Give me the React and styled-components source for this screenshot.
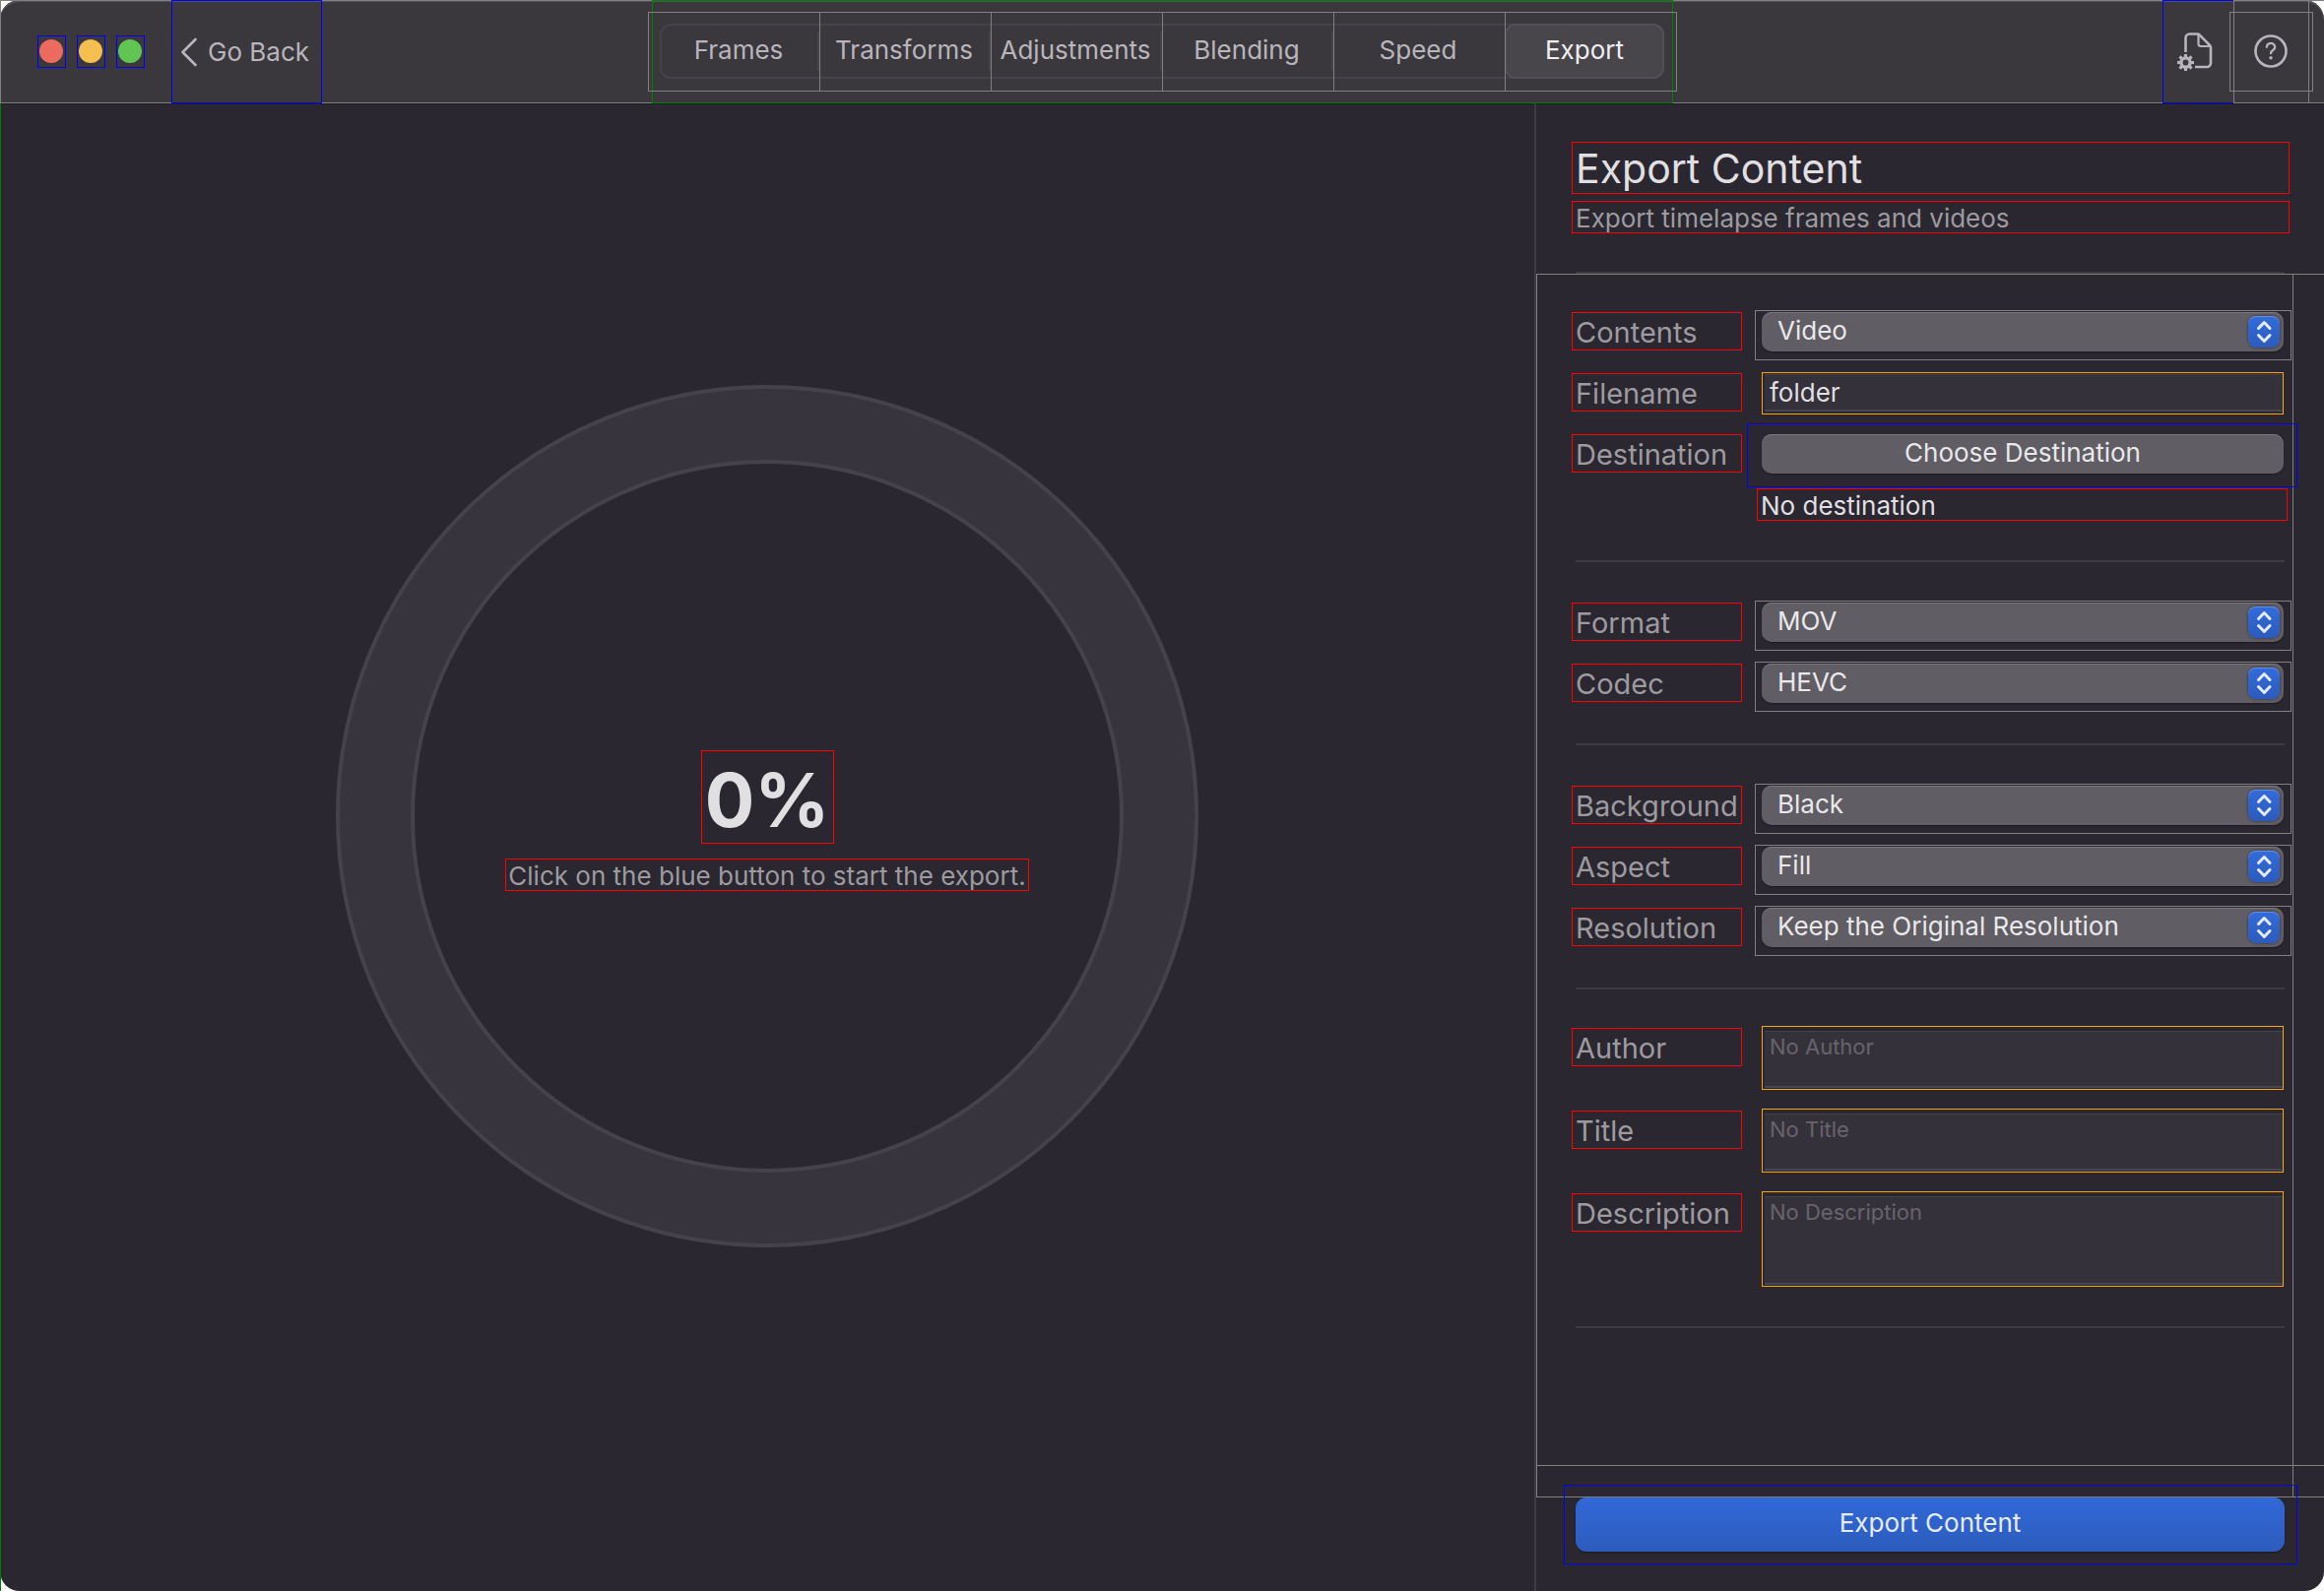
import React from 'react';
import styled, { createGlobalStyle, css } from 'styled-components';

const c = {
  bg: '#2a2730',
  bar: '#3a373d',
  line: '#3e3a44',
  frameGrey: '#808080',
  frameRed: '#ff0000',
  frameBlue: '#0000ff',
  frameGreen: '#008000',
  frameOrange: '#ffa500',
  text: '#e0dfe1',
  muted: '#9d9ba0',
  barText: '#b8b5bc',
  pill: '#605d64',
  pillEdge: '#7c797f',
};

const GlobalStyle = createGlobalStyle`
  *, *::before, *::after { box-sizing: border-box; }
  body {
    margin: 0;
    background: #ffffff;
    font-family: Inter, "Liberation Sans", sans-serif;
    font-size: 26px;
    color: ${c.text};
  }
  button, input, select, textarea { font: inherit; color: inherit; margin: 0; }
  h1, p { margin: 0; font-weight: 400; }
`;

/* Debug frame drawn over a control, outside its own box */
const frame = (color, inset) => css`
  position: relative;
  &::after {
    content: '';
    position: absolute;
    inset: ${inset};
    border: 1px solid ${color};
    pointer-events: none;
  }
`;

const Window = styled.div`
  min-height: 100vh;
  display: flex;
  flex-direction: column;
`;

/* ---------- Title bar ---------- */

const TitleBar = styled.header`
  position: relative;
  display: grid;
  grid-template-columns: 1fr auto 1fr;
  height: 105px;
  background: ${c.bar};
  border-radius: 20px 20px 0 0;
  box-shadow: inset 0 2px 0 #545158;
  color: ${c.barText};
  &::before {
    content: '';
    position: absolute;
    inset: 0;
    border: 1px solid ${c.frameGrey};
    border-right: 0;
    pointer-events: none;
  }
`;

const BarSide = styled.div`
  position: relative;
  display: flex;
  align-items: center;
  justify-content: ${(p) => (p.$end ? 'flex-end' : 'flex-start')};
  padding: ${(p) => (p.$end ? '0 15px 0 0' : '0 0 0 38px')};
`;

const Lights = styled.div`
  display: flex;
  gap: 11px;
  margin-right: 27px;
`;

const Light = styled.button`
  display: block;
  width: 29px;
  height: 33px;
  padding: 3px 2px 4px 1px;
  border: 1px solid ${c.frameBlue};
  background: none;
  &::before {
    content: '';
    display: block;
    width: 24px;
    height: 24px;
    border-radius: 50%;
    background: ${(p) => p.$color};
  }
`;

const BackButton = styled.button`
  display: flex;
  align-items: center;
  gap: 10px;
  width: 153px;
  height: 105px;
  padding: 0 0 0 8px;
  border: 1px solid ${c.frameBlue};
  background: none;
  white-space: nowrap;
`;

const TabArea = styled.nav`
  position: relative;
  display: flex;
  justify-content: center;
  width: 1037px;
  height: 105px;
  padding-top: 23px;
  border: 1px solid ${c.frameGreen};
`;

const TabList = styled.div`
  display: grid;
  grid-template-columns: 162px repeat(4, 174px) 162px;
  height: 56px;
  border-radius: 11px;
  box-shadow: inset 0 0 0 2px #454249;
`;

const Tab = styled.button`
  border: 0;
  padding: ${(p) => (p.$selected ? '0 0 3px' : '0 2px 3px 0')};
  border-radius: ${(p) => (p.$selected ? '11px' : '0')};
  background: ${(p) =>
    p.$divider
      ? 'linear-gradient(#454249, #454249) right center / 2px 40px no-repeat'
      : p.$selected
        ? '#48454b'
        : 'none'};
  box-shadow: ${(p) => (p.$selected ? 'inset 0 0 0 2px #524f56' : 'none')};
  color: ${(p) => (p.$selected ? '#efeef0' : 'inherit')};
  ${frame(c.frameGrey, '-12px -1px -13px 0')}
  &:first-child::after { left: -12px; }
  &:last-child::after { right: -13px; }
`;

const PresetButton = styled.button`
  display: flex;
  align-items: center;
  justify-content: center;
  width: 73px;
  height: 105px;
  padding: 0 7px 0 0;
  border: 1px solid ${c.frameBlue};
  background: none;
`;

const HelpButton = styled.button`
  display: flex;
  align-items: center;
  justify-content: center;
  width: 77px;
  height: 105px;
  margin-left: -1px;
  padding: 0 2px 1px 0;
  border: 1px solid ${c.frameGrey};
  background: none;
  ${frame(c.frameGrey, '11px -5px')}
`;

/* ---------- Body ---------- */

const Body = styled.main`
  position: relative;
  flex: 1;
  display: grid;
  grid-template-columns: 1fr 802px;
  background: ${c.bg};
  border-radius: 0 0 20px 20px;
  box-shadow: inset 0 1px 0 #1f1c23;
  &::after {
    content: '';
    position: absolute;
    inset: 0 auto 0 0;
    width: 1px;
    background: ${c.frameGreen};
  }
`;

const Stage = styled.section`
  display: flex;
  align-items: center;
  justify-content: center;
  padding-bottom: 63px;
`;

const Ring = styled.div`
  display: grid;
  place-items: center;
  width: 876px;
  height: 876px;
  border: 4px solid #46424b;
  border-radius: 50%;
  background: #38343d;
`;

const Disc = styled.div`
  display: flex;
  flex-direction: column;
  align-items: center;
  justify-content: center;
  gap: 15px;
  width: 724px;
  height: 724px;
  padding-top: 9px;
  border: 4px solid #46424b;
  border-radius: 50%;
  background: ${c.bg};
`;

const Percent = styled.output`
  width: 135px;
  height: 95px;
  border: 1px solid ${c.frameRed};
  text-align: center;
  font-size: 75px;
  line-height: 99px;
  font-weight: 700;
`;

const TextBox = styled.p`
  height: 33px;
  padding: 0 ${(p) => p.$pad || 3}px;
  border: 1px solid ${c.frameRed};
  line-height: 33px;
  white-space: nowrap;
  color: ${(p) => (p.$bright ? c.text : c.muted)};
`;

/* ---------- Sidebar ---------- */

const Sidebar = styled.aside`
  display: flex;
  flex-direction: column;
  border-left: 2px solid ${c.line};
`;

const SideHeader = styled.div`
  display: flex;
  flex-direction: column;
  gap: 7px;
  padding: 39px 35px 39px 36px;
`;

const Title = styled.h1`
  height: 53px;
  padding-left: 3px;
  border: 1px solid ${c.frameRed};
  font-size: 41px;
  line-height: 52px;
`;

const Divider = styled.hr`
  width: 720px;
  height: 2px;
  margin: 0 0 0 ${(p) => p.$indent}px;
  border: 0;
  background: ${c.line};
`;

const ScrollArea = styled.div`
  flex: 1;
  display: grid;
  grid-template-columns: 1fr 31px;
  grid-template-rows: 1fr 31px;
  border: 1px solid ${c.frameGrey};
  border-right: 0;
`;

const Pane = styled.form`
  border-right: 1px solid ${c.frameGrey};
  border-bottom: 1px solid ${c.frameGrey};
`;

const VTrack = styled.div`
  border-bottom: 1px solid ${c.frameGrey};
`;

const HTrack = styled.div`
  border-right: 1px solid ${c.frameGrey};
`;

const Section = styled.div`
  display: flex;
  flex-direction: column;
  gap: ${(p) => p.$gap || 22}px;
  padding: ${(p) => p.$top || 41}px 9px ${(p) => p.$bottom || 41}px 35px;
`;

const Row = styled.div`
  display: grid;
  grid-template-columns: 173px 1fr;
  column-gap: 20px;
  align-items: start;
`;

const Label = styled.label`
  height: 39px;
  margin-top: ${(p) => p.$top || 0}px;
  padding-left: 3px;
  border: 1px solid ${c.frameRed};
  font-size: 29px;
  line-height: 39px;
  white-space: nowrap;
  color: ${c.muted};
`;

const SelectWrap = styled.div`
  height: 40px;
  ${frame(c.frameGrey, '-2px -8px -9px -7px')}
`;

const pill = css`
  width: 100%;
  height: 40px;
  border: 0;
  border-radius: 10px;
  background: ${c.pill};
  box-shadow: inset 0 1px 0 ${c.pillEdge}, 0 1px 2px rgba(0, 0, 0, 0.35);
  color: #e9e8ea;
`;

const Select = styled.select`
  appearance: none;
  display: block;
  padding: 0 44px 3px 16px;
  ${pill}
`;

const Stepper = styled.span`
  position: absolute;
  top: 4px;
  right: 4px;
  width: 32px;
  height: 32px;
  border-radius: 8px;
  background: linear-gradient(#336bdc, #2c5bbb);
  box-shadow: inset 0 1px 0 #6590e2, 0 0 2px 1px rgba(0, 0, 0, 0.25);
  pointer-events: none;
`;

const field = css`
  display: block;
  width: 100%;
  border: 1px solid ${c.frameOrange};
  border-radius: 0;
  outline: 0;
  background: #35313a;
`;

const Input = styled.input`
  ${field}
  height: 43px;
  margin: -1px 0 -2px;
  padding: 0 7px 2px;
  box-shadow: inset 2px 0 0 ${c.bg}, inset 0 1px 0 ${c.bg}, inset 0 -2px 0 ${c.bg},
    inset 0 -4px 0 #49454e, inset 0 2px 0 #45414a;
`;

const TextArea = styled.textarea`
  ${field}
  height: ${(p) => p.$height}px;
  padding: 7px;
  resize: none;
  overflow: hidden;
  font-size: 22px;
  box-shadow: inset 2px 0 0 ${c.bg}, inset 0 4px 0 ${c.bg}, inset 0 -1px 0 ${c.bg},
    inset 0 -3px 0 #49454e, inset 0 5px 0 #45414a;
  &::placeholder { color: #67646b; opacity: 1; }
`;

const Destination = styled.div`
  display: flex;
  flex-direction: column;
  gap: 15px;
`;

const PillButton = styled.button`
  ${pill}
  padding: 0 0 3px;
  ${frame(c.frameBlue, '-11px -14px -14px -15px')}
`;

const Bleed = styled.div`
  margin: 0 -4px 0 -5px;
`;

const Footer = styled.div`
  padding: 0 40px;
  margin-bottom: 40px;
`;

const ExportButton = styled.button`
  display: block;
  width: 100%;
  height: 55px;
  padding: 0 0 4px;
  border: 0;
  border-radius: 11px;
  background: linear-gradient(#3168d8, #2c5cbc);
  box-shadow: 0 1px 2px rgba(0, 0, 0, 0.4);
  color: #e6ebf7;
  ${frame(c.frameBlue, '-13px -13px -13px -12px')}
`;

/* ---------- Icons ---------- */

const BackIcon = () => (
  <svg width="18" height="30" viewBox="0 0 18 30" fill="none" stroke="currentColor" strokeWidth="2.6" strokeLinecap="round" strokeLinejoin="round" aria-hidden="true">
    <path d="M15.5 2L2.5 15L15.5 28" />
  </svg>
);

const PresetIcon = () => (
  <svg width="36" height="40" viewBox="0 0 36 40" fill="none" stroke="currentColor" strokeWidth="2.6" aria-hidden="true">
    <path d="M8.5 20V5.5a4 4 0 0 1 4-4H20.5a3 3 0 0 1 2 .9L33 13a3 3 0 0 1 1 2.2V31a4 4 0 0 1-4 4H18" />
    <path d="M21.5 2V11.5a2.5 2.5 0 0 0 2.5 2.5H33.5" strokeWidth="2.2" />
    <circle cx="8.5" cy="30.5" r="4.6" strokeWidth="3.4" />
    {[0, 45, 90, 135].map((a) => (
      <path key={a} d="M8.5 22V25M8.5 36V39" strokeWidth="3.2" transform={`rotate(${a} 8.5 30.5)`} />
    ))}
  </svg>
);

const HelpIcon = () => (
  <svg width="34" height="34" viewBox="0 0 34 34" fill="none" stroke="currentColor" strokeLinecap="round" strokeLinejoin="round" aria-hidden="true">
    <circle cx="17" cy="17" r="15.5" strokeWidth="2.6" />
    <path d="M12.8 12.8a4.2 3.8 0 1 1 6.6 3c-1.5 1-2.4 1.7-2.4 3.4" strokeWidth="2.3" />
    <circle cx="17" cy="23.8" r="1.7" fill="currentColor" stroke="none" />
  </svg>
);

const StepperIcon = () => (
  <svg width="32" height="32" viewBox="0 0 32 32" fill="none" stroke="#e3eaf8" strokeWidth="3" strokeLinecap="round" strokeLinejoin="round" aria-hidden="true">
    <path d="M10.5 12.5L16.3 6.5L22 12.5M10.5 19.5L16.3 25.5L22 19.5" />
  </svg>
);

/* ---------- Page ---------- */

const tabs = ['Frames', 'Transforms', 'Adjustments', 'Blending', 'Speed', 'Export'];

const SelectRow = ({ id, label, value }) => (
  <Row>
    <Label htmlFor={id}>{label}</Label>
    <SelectWrap>
      <Select id={id} defaultValue={value}>
        <option>{value}</option>
      </Select>
      <Stepper>
        <StepperIcon />
      </Stepper>
    </SelectWrap>
  </Row>
);

const TextRow = ({ id, label, height }) => (
  <Row>
    <Label htmlFor={id} $top={2}>{label}</Label>
    <TextArea id={id} placeholder={`No ${label}`} $height={height} />
  </Row>
);

export default function App() {
  return (
    <Window>
      <GlobalStyle />
      <TitleBar>
        <BarSide>
          <Lights>
            <Light $color="#ed6a5f" aria-label="Close" />
            <Light $color="#f5bf4f" aria-label="Minimize" />
            <Light $color="#61c554" aria-label="Zoom" />
          </Lights>
          <BackButton>
            <BackIcon />
            Go Back
          </BackButton>
        </BarSide>
        <TabArea>
          <TabList role="tablist">
            {tabs.map((name, i) => (
              <Tab key={name} role="tab" aria-selected={name === 'Export'} $selected={name === 'Export'} $divider={i < 4}>
                {name}
              </Tab>
            ))}
          </TabList>
        </TabArea>
        <BarSide $end>
          <PresetButton aria-label="Presets">
            <PresetIcon />
          </PresetButton>
          <HelpButton aria-label="Help">
            <HelpIcon />
          </HelpButton>
        </BarSide>
      </TitleBar>
      <Body>
        <Stage>
          <Ring>
            <Disc>
              <Percent>0%</Percent>
              <TextBox $pad={2}>Click on the blue button to start the export.</TextBox>
            </Disc>
          </Ring>
        </Stage>
        <Sidebar>
          <SideHeader>
            <Title>Export Content</Title>
            <TextBox>Export timelapse frames and videos</TextBox>
          </SideHeader>
          <Divider $indent={40} />
          <ScrollArea>
            <Pane>
              <Section $top={38} $bottom={40}>
                <SelectRow id="contents" label="Contents" value="Video" />
                <Row>
                  <Label htmlFor="filename">Filename</Label>
                  <Input id="filename" defaultValue="folder" />
                </Row>
                <Row>
                  <Label htmlFor="destination">Destination</Label>
                  <Destination>
                    <PillButton id="destination" type="button">Choose Destination</PillButton>
                    <Bleed>
                      <TextBox $bright>No destination</TextBox>
                    </Bleed>
                  </Destination>
                </Row>
              </Section>
              <Divider $indent={39} />
              <Section>
                <SelectRow id="format" label="Format" value="MOV" />
                <SelectRow id="codec" label="Codec" value="HEVC" />
              </Section>
              <Divider $indent={39} />
              <Section>
                <SelectRow id="background" label="Background" value="Black" />
                <SelectRow id="aspect" label="Aspect" value="Fill" />
                <SelectRow id="resolution" label="Resolution" value="Keep the Original Resolution" />
              </Section>
              <Divider $indent={39} />
              <Section $top={37} $bottom={40} $gap={19}>
                <TextRow id="author" label="Author" height={65} />
                <TextRow id="title" label="Title" height={65} />
                <TextRow id="description" label="Description" height={97} />
              </Section>
              <Divider $indent={39} />
            </Pane>
            <VTrack />
            <HTrack />
          </ScrollArea>
          <Footer>
            <ExportButton type="button">Export Content</ExportButton>
          </Footer>
        </Sidebar>
      </Body>
    </Window>
  );
}
